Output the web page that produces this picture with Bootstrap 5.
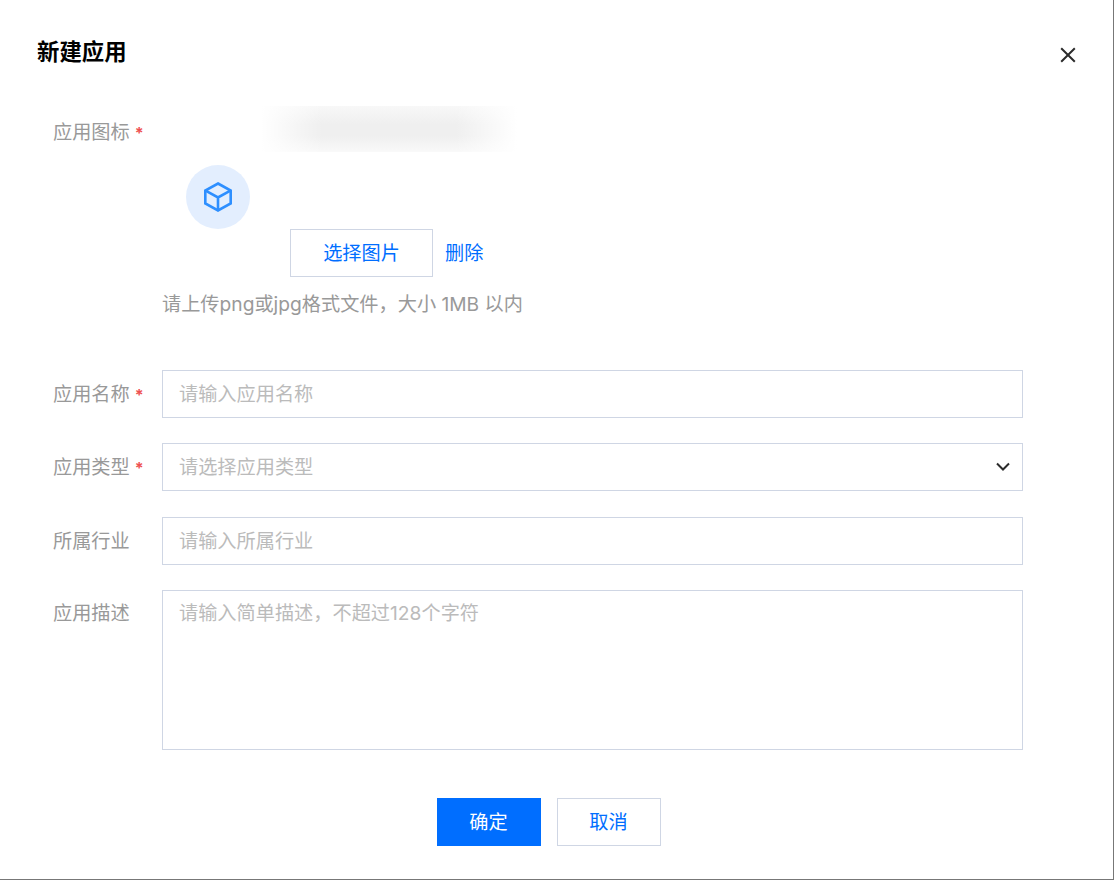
<!DOCTYPE html>
<html lang="zh-CN">
<head>
<meta charset="utf-8">
<title>新建应用</title>
<link href="https://cdn.jsdelivr.net/npm/bootstrap@5.3.0/dist/css/bootstrap.min.css" rel="stylesheet">
<style>
html,body{height:100%;margin:0;background:#fff;overflow:hidden}
body{font-family:Inter,"Noto Sans CJK SC",sans-serif;font-size:19.2px;color:#999}
.dlg{width:1114px;height:880px;border-right:1px solid #777;border-bottom:1px solid #777;position:relative;padding:0}
.dlg-title{margin:0;padding:36px 0 0 37px;font-size:22.4px;font-weight:700;line-height:32px;color:#000;height:106px}
.dlg-close{position:absolute;left:1060px;top:47px;width:16px;height:16px;padding:0;border:0;background:none;display:flex}
.fld{display:flex;margin-left:53px;margin-right:90px}
.fld-label{width:109px;height:48px;flex:none;line-height:48px;color:#999;white-space:nowrap;margin:0}
.req{color:#ee5050;font-size:16px;line-height:1;margin-left:5px;font-weight:700}
.fld-body{flex:1;min-width:0}
.ctl{height:48px;border:1px solid #cfd6e4;border-radius:0;padding:0 16px;font-size:19.2px;color:#bbb;background-color:#fff;box-shadow:none;line-height:46px}
.ctl::placeholder{color:#bbb;opacity:1}
.ctl-sel{background-image:none;cursor:pointer}
.sel-wrap{position:relative}
.sel-arrow{position:absolute;right:12px;top:18px;width:16px;height:12px;pointer-events:none}
.ctl-area{height:160px;padding:8px 16px;line-height:28px;resize:none}
.up-block{height:264px}
.up-label-row{padding-top:2px;height:50px}
.desc-label{line-height:46px}
.blur-patch{width:256px;height:46px;margin-left:99px;background:linear-gradient(90deg,#fff 0,rgba(255,255,255,0) 24%,rgba(255,255,255,0) 76%,#fff 100%),linear-gradient(180deg,#f8f8f8 0,#efefef 40%,#efefef 65%,#f9f9f9 100%)}
.ava{width:64px;height:64px;border-radius:50%;background:#e3eefe;margin:13px 0 0 24px;display:flex;align-items:center;justify-content:center}
.up-actions{display:flex;align-items:center;margin-left:128px;gap:12px}
.btn-pick{width:143px;height:48px;border:1px solid #cfd6e4;border-radius:0;background:#fff;color:#006eff;font-size:19.2px;padding:0}
.lnk-del{color:#006eff;text-decoration:none;font-size:19.2px}
.hint{margin:11px 0 0;font-size:19.2px;line-height:32px;color:#999;white-space:nowrap}
.gap-a{margin-top:25px}
.gap-b{margin-top:26px}
.dlg-foot{display:flex;justify-content:center;gap:16px;margin-top:48px;padding-right:16px}
.btn-ok,.btn-no{width:104px;height:48px;border-radius:0;font-size:19.2px;padding:0}
.btn-ok{background:#006eff;border:1px solid #006eff;color:#fff}
.btn-ok:hover{background:#006eff;color:#fff}
.btn-no{background:#fff;border:1px solid #cfd6e4;color:#006eff}
</style>
</head>
<body>
<div class="dlg">
  <h5 class="dlg-title">新建应用</h5>
  <button class="dlg-close" type="button" aria-label="关闭">
    <svg width="16" height="16" viewBox="0 0 16 16" fill="none" stroke="#2b2b2b" stroke-width="2"><path d="M1.2 1.2 14.8 14.8M14.8 1.2 1.2 14.8"/></svg>
  </button>
  <form>
    <div class="fld up-block">
      <div class="fld-label up-label-row">应用图标<span class="req">*</span></div>
      <div class="fld-body">
        <div class="blur-patch"></div>
        <div class="ava">
          <svg width="30" height="30" viewBox="0 0 30 30" fill="none" stroke="#2e8fff" stroke-width="2.6" stroke-linejoin="miter"><path d="M15 1.5 27.7 8.5V21.5L15 28.5 2.3 21.5V8.5Z"/><path d="M2.6 8.6 15 15.5 27.4 8.6M15 15.5V28"/></svg>
        </div>
        <div class="up-actions">
          <button class="btn btn-pick" type="button">选择图片</button>
          <a class="lnk-del" href="#">删除</a>
        </div>
        <p class="hint">请上传png或jpg格式文件，大小 1MB 以内</p>
      </div>
    </div>
    <div class="fld">
      <label class="fld-label">应用名称<span class="req">*</span></label>
      <div class="fld-body"><input class="form-control ctl" type="text" placeholder="请输入应用名称"></div>
    </div>
    <div class="fld gap-a">
      <label class="fld-label">应用类型<span class="req">*</span></label>
      <div class="fld-body sel-wrap">
        <select class="form-select ctl ctl-sel"><option>请选择应用类型</option></select>
        <svg class="sel-arrow" viewBox="0 0 16 12" fill="none" stroke="#2b2b2b" stroke-width="2"><path d="M2 2.5 8 8.5 14 2.5"/></svg>
      </div>
    </div>
    <div class="fld gap-b">
      <label class="fld-label">所属行业</label>
      <div class="fld-body"><input class="form-control ctl" type="text" placeholder="请输入所属行业"></div>
    </div>
    <div class="fld gap-a">
      <label class="fld-label desc-label">应用描述</label>
      <div class="fld-body"><textarea class="form-control ctl ctl-area" placeholder="请输入简单描述，不超过128个字符"></textarea></div>
    </div>
    <div class="dlg-foot">
      <button class="btn btn-ok" type="button">确定</button>
      <button class="btn btn-no" type="button">取消</button>
    </div>
  </form>
</div>
</body>
</html>
